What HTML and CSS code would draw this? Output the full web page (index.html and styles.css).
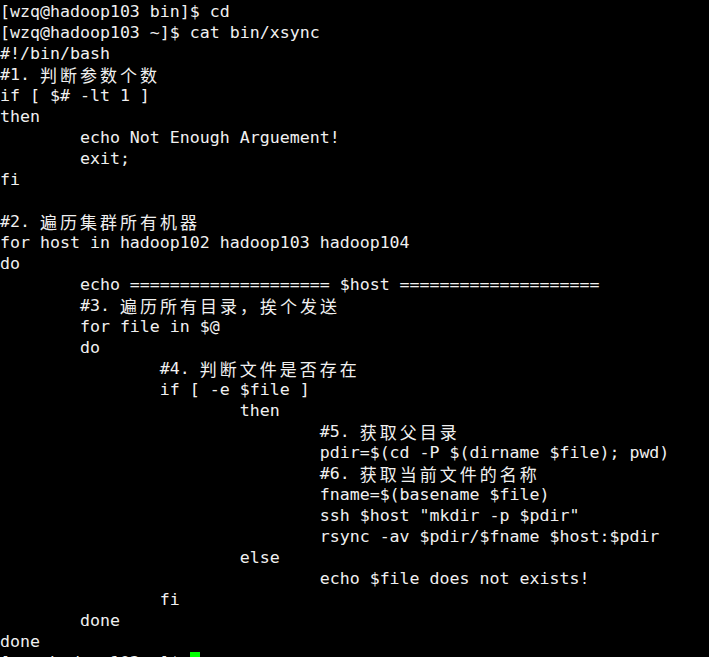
FILE: index.html
```html
<!DOCTYPE html>
<html>
<head>
<meta charset="utf-8">
<link rel="stylesheet" href="styles.css">
</head>
<body>
<div class="term">
<div class="ln">[wzq@hadoop103 bin]$ cd</div>
<div class="ln">[wzq@hadoop103 ~]$ cat bin/xsync</div>
<div class="ln">#!/bin/bash</div>
<div class="ln">#1. <span class="cjk">判断参数个数</span></div>
<div class="ln">if [ $# -lt 1 ]</div>
<div class="ln">then</div>
<div class="ln">        echo Not Enough Arguement!</div>
<div class="ln">        exit;</div>
<div class="ln">fi</div>
<div class="ln"> </div>
<div class="ln">#2. <span class="cjk">遍历集群所有机器</span></div>
<div class="ln">for host in hadoop102 hadoop103 hadoop104</div>
<div class="ln">do</div>
<div class="ln">        echo ==================== $host ====================</div>
<div class="ln">        #3. <span class="cjk">遍历所有目录，挨个发送</span></div>
<div class="ln">        for file in $@</div>
<div class="ln">        do</div>
<div class="ln">                #4. <span class="cjk">判断文件是否存在</span></div>
<div class="ln">                if [ -e $file ]</div>
<div class="ln">                        then</div>
<div class="ln">                                #5. <span class="cjk">获取父目录</span></div>
<div class="ln">                                pdir=$(cd -P $(dirname $file); pwd)</div>
<div class="ln">                                #6. <span class="cjk">获取当前文件的名称</span></div>
<div class="ln">                                fname=$(basename $file)</div>
<div class="ln">                                ssh $host "mkdir -p $pdir"</div>
<div class="ln">                                rsync -av $pdir/$fname $host:$pdir</div>
<div class="ln">                        else</div>
<div class="ln">                                echo $file does not exists!</div>
<div class="ln">                fi</div>
<div class="ln">        done</div>
<div class="ln">done</div>
<div class="ln">[wzq@hadoop103 ~]$ <span class="cursor"></span></div>
</div>
</body>
</html>
```
FILE: styles.css
```css
html, body {
  margin: 0;
  padding: 0;
  background: #000000;
  overflow: hidden;
}
.term {
  background: #000000;
  color: #f0f0f0;
  font-family: "DejaVu Sans Mono", "Liberation Mono", monospace;
  font-size: 16.6px;
  width: 709px;
  height: 657px;
  padding-top: 1px;
  box-sizing: border-box;
  overflow: hidden;
}
.ln {
  height: 21px;
  line-height: 21px;
  white-space: pre;
  overflow: visible;
}
.cjk {
  font-family: "Noto Sans CJK SC", "DejaVu Sans Mono", sans-serif;
  font-size: 17px;
  letter-spacing: 3px;
  line-height: 21px;
  vertical-align: top;
}
.cursor {
  display: inline-block;
  width: 10px;
  height: 18px;
  background: #00ff00;
  vertical-align: top;
  margin-top: 0;
}
```
